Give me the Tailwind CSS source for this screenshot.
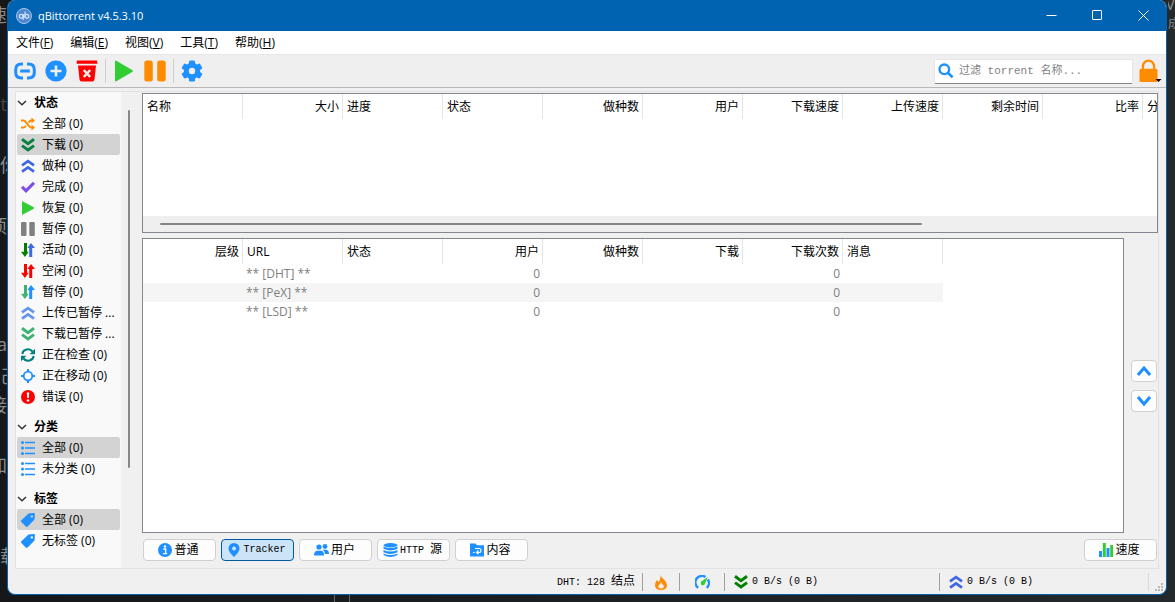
<!DOCTYPE html>
<html lang="zh-CN">
<head>
<meta charset="utf-8">
<title>qBittorrent v4.5.3.10</title>
<script src="https://cdn.jsdelivr.net/npm/@tailwindcss/browser@4"></script>
</head>
<body class="relative flex h-screen overflow-hidden bg-linear-to-r from-[#151719] to-[#24292b] pr-2 pb-[7px] pl-[7px] font-['Open_Sans','Noto_Sans_CJK_SC',sans-serif] text-[12px] leading-4 text-black">

<svg class="hidden" xmlns="http://www.w3.org/2000/svg">
  <symbol id="down2" viewBox="0 0 14 14"><path d="M1 1.300 7 5.600l6-4.300M1 7.600l6 4.300 6-4.300" fill="none" stroke="currentColor" stroke-width="3"/></symbol>
  <symbol id="up2" viewBox="0 0 14 14"><path d="M1 6.400 7 2.100l6 4.300M1 12.700l6-4.300 6 4.300" fill="none" stroke="currentColor" stroke-width="2.800"/></symbol>
  <symbol id="play" viewBox="0 0 14 14"><path d="M1 .8v12.400q0 .9.900.4l10.800-5.900q.9-.7 0-1.400L1.900.4Q1-.1 1 .8z" fill="currentColor"/></symbol>
  <symbol id="pause" viewBox="0 0 14 14"><rect x="0" y="0" width="5.500" height="14" rx="1.200" fill="currentColor"/><rect x="8.300" y="0" width="5.500" height="14" rx="1.200" fill="currentColor"/></symbol>
  <symbol id="arrD" viewBox="0 0 14 14"><path d="M3 0h3v8.700h1.700L3.900 13.900 0 8.700h3z" fill="currentColor"/></symbol>
  <symbol id="arrU" viewBox="0 0 14 14"><path d="M11.200 14H8.200V5H6.400L10 .1 14 5h-2.800z" fill="currentColor"/></symbol>
  <symbol id="list" viewBox="0 0 14 14"><g fill="currentColor"><circle cx="1.500" cy="1.500" r="1.500"/><circle cx="1.500" cy="7" r="1.500"/><circle cx="1.500" cy="12.500" r="1.500"/><path d="M4 .800h10v1.500H4zM4 6.200h10v1.600H4zM4 11.700h10v1.500H4z"/></g></symbol>
  <symbol id="tag" viewBox="0 0 14 14"><path fill-rule="evenodd" d="M7.500.6 12.600.1q1.500 0 1.300 1.400l-.4 5-6.800 6.900q-1 .8-1.900 0L.4 9.100q-.9-1 0-1.900zM10.800 2.200a1.200 1.200 0 1 0 .1 0z" fill="currentColor"/></symbol>
  <symbol id="chev" viewBox="0 0 10 6"><path d="M1 1l4 3.800L9 1" fill="none" stroke="#333" stroke-width="1.500"/></symbol>
</svg>

<div aria-hidden="true" class="absolute top-0 left-0 h-full w-[7px] overflow-hidden text-[18px] leading-5 text-[#8b8b8b]">
  <span class="absolute top-[5px] right-0">速</span>
  <span class="absolute top-[94px] right-0 text-[#444]">t</span>
  <span class="absolute top-[155px] left-0">你</span>
  <span class="absolute top-[216px] right-0">项</span>
  <span class="absolute top-[334px] right-0">a</span>
  <span class="absolute top-[366px] left-0">己</span>
  <span class="absolute top-[395px] right-0">接</span>
  <span class="absolute top-[455px] right-0">加</span>
  <span class="absolute top-[546px] left-0">载</span>
</div>
<div aria-hidden="true" class="absolute top-0 right-0 h-10 w-[7px] overflow-hidden text-[12px] text-[#8b8b8b]">
  <span class="absolute -top-1 right-0 text-[16px]">V</span>
  <span class="absolute top-4 left-0">成</span>
</div>
<div aria-hidden="true" class="absolute bottom-0 left-[334px] h-[7px] w-4 border-x border-[#666]"></div>

<main class="relative flex min-w-0 grow flex-col overflow-hidden rounded-lg border border-t-0 border-[#0063b1] bg-[#f0f0f0]">
  <header class="flex h-[31px] shrink-0 items-center bg-[#0063b1] pl-2 text-white">
    <svg class="size-4" viewBox="0 0 16 16"><circle cx="8" cy="8" r="7.500" fill="#4f86d0" stroke="#a9c8ee"/><g fill="none" stroke="#d4e6fb" stroke-width="1.200"><circle cx="5.200" cy="8.200" r="1.900"/><path d="M7.200 6v6M9 3.500v6.600"/><circle cx="10.900" cy="8.200" r="1.900"/></g></svg>
    <h1 class="ml-1.5 grow text-[11px]">qBittorrent v4.5.3.10</h1>
    <button aria-label="最小化" class="flex h-full w-[46px] items-center justify-center"><svg class="size-[11px]" viewBox="0 0 11 11"><path d="M.5 5.500h10" stroke="#fff"/></svg></button>
    <button aria-label="最大化" class="flex h-full w-[46px] items-center justify-center"><svg class="size-[11px]" viewBox="0 0 11 11"><rect x=".5" y=".5" width="9" height="9" rx=".5" fill="none" stroke="#fff"/></svg></button>
    <button aria-label="关闭" class="flex h-full w-[46px] items-center justify-center"><svg class="size-[11px]" viewBox="0 0 11 11"><path d="M.5.5l10 10M10.500.5l-10 10" stroke="#fff"/></svg></button>
  </header>

  <nav class="flex h-6 shrink-0 items-center gap-px border-b border-[#e8e8e8] bg-white">
    <button class="px-2">文件(<u>F</u>)</button>
    <button class="px-2">编辑(<u>E</u>)</button>
    <button class="px-2">视图(<u>V</u>)</button>
    <button class="px-2">工具(<u>T</u>)</button>
    <button class="px-2">帮助(<u>H</u>)</button>
  </nav>

  <div class="flex h-[33px] shrink-0 items-center border-b border-[#b8b8b8] bg-[#efefef] pl-px">
    <button aria-label="添加链接" class="flex w-[31px] justify-center text-[#1e90ff]"><svg class="size-[22px]" viewBox="0 0 22 22"><g fill="none" stroke="currentColor" stroke-width="3"><path d="M9 4H7.500Q1.700 4 1.700 9.500v3Q1.700 18 7.500 18H9M13 4h1.500q5.800 0 5.800 5.500v3q0 5.500-5.800 5.500H13"/><path d="M6.200 11h9.600"/></g></svg></button>
    <button aria-label="添加文件" class="flex w-[31px] justify-center"><svg class="size-[22px]" viewBox="0 0 22 22"><circle cx="11" cy="11" r="10.600" fill="#1e90ff"/><path d="M11 5.500v11M5.500 11h11" stroke="#efefef" stroke-width="2.600"/></svg></button>
    <button aria-label="删除" class="flex w-[31px] justify-center"><svg class="size-[22px]" viewBox="0 0 22 22"><path d="M1.500.6h19q.8 0 .8 1v2.200H.7V1.600q0-1 .8-1zM2 5.500h18l-1.500 14q-.3 2-2.200 2H5.700q-1.900 0-2.200-2z" fill="#f00"/><path d="m7.800 10 6.400 7M14.200 10l-6.400 7" stroke="#efefef" stroke-width="2.500"/></svg></button>
    <div class="flex h-6 w-1.5 justify-center"><div class="w-px bg-[#cfcfcf]"></div></div>
    <button aria-label="恢复" class="flex w-[31px] justify-center"><svg class="size-[22px]" viewBox="0 0 22 22"><path d="M2 1.500v19q0 1.400 1.300.7l16.200-9.500q1-.7 0-1.400L3.300.8Q2 .1 2 1.500z" fill="#32cd32"/></svg></button>
    <button aria-label="暂停" class="flex w-[31px] justify-center"><svg class="size-[22px]" viewBox="0 0 22 22" fill="#ff8c00"><rect x=".3" y=".5" width="8.500" height="21" rx="2.500"/><rect x="13.200" y=".5" width="8.500" height="21" rx="2.500"/></svg></button>
    <div class="flex h-6 w-1.5 justify-center"><div class="w-px bg-[#cfcfcf]"></div></div>
    <button aria-label="选项" class="flex w-[31px] justify-center"><svg class="size-[22px]" viewBox="0 0 22 22"><g fill="#1e90ff"><circle cx="11" cy="11" r="8.200"/><rect x="8" y=".5" width="6" height="21" rx="1.200"/><rect x="8" y=".5" width="6" height="21" rx="1.200" transform="rotate(60 11 11)"/><rect x="8" y=".5" width="6" height="21" rx="1.200" transform="rotate(120 11 11)"/></g><circle cx="11" cy="11" r="3.200" fill="#efefef"/></svg></button>
    <label class="ml-auto flex h-[25px] w-[199px] items-center rounded-xs border border-[#e5e5e5] border-b-[#868686] bg-white pl-[3px]">
      <svg class="size-4 shrink-0" viewBox="0 0 16 16" fill="none" stroke="#1e90ff"><circle cx="6.300" cy="6.300" r="4.800" stroke-width="2.300"/><path d="m9.800 9.800 4.800 4.500" stroke-width="2.600"/></svg>
      <input type="text" aria-label="过滤 torrent 名称" placeholder="过滤 torrent 名称..." class="ml-[5px] w-full min-w-0 bg-transparent font-['Liberation_Mono','Noto_Sans_CJK_SC',monospace] text-[11px] outline-none placeholder:text-[#7f7f7f]">
    </label>
    <button aria-label="锁定" class="mr-1 ml-1.5 flex"><svg class="h-6 w-[23px]" viewBox="0 0 23 24"><path d="M3.900 11V7.500a5.600 5.800 0 0 1 11.200 0V11" fill="none" stroke="#ff8c00" stroke-width="2.300"/><rect x=".5" y="9.800" width="18" height="13.200" rx="1.500" fill="#ff8c00"/><path d="M16.500 20h6l-3 3z" fill="#000"/></svg></button>
  </div>

  <div class="mx-[7px] mt-[3px] flex min-h-0 grow border border-[#e2e2e2]">
    <aside class="flex w-[105px] shrink-0 flex-col bg-[#f9f9f9] pt-px pr-px pl-px">
      <button class="flex h-5 items-center gap-[7px] text-left font-bold"><svg class="h-1.5 w-2.5"><use href="#chev"/></svg>状态</button>
      <button class="flex h-[21px] items-center gap-[7px] rounded-xs pl-1"><svg class="size-3.5 shrink-0" viewBox="0 0 14 14" fill="none" stroke="#ff8c00" stroke-width="2"><path d="M0 3.500h2.500q1 0 1.700.8l4.400 5.400q.7.800 1.700.8H12M0 10.500h2.500q1 0 1.700-.8l.7-.9M7.600 5.600l1-1.300q.7-.8 1.700-.8H12"/><path d="M10.500.5 14 3.500 10.500 6.500zM10.500 7.500 14 10.500 10.500 13.500z" fill="#ff8c00" stroke="none"/></svg>全部 (0)</button>
      <button class="flex h-[21px] items-center gap-[7px] rounded-xs bg-[#d3d3d3] pl-1"><svg class="size-3.5 shrink-0 text-[#0a8043]"><use href="#down2"/></svg>下载 (0)</button>
      <button class="flex h-[21px] items-center gap-[7px] rounded-xs pl-1"><svg class="size-3.5 shrink-0 text-[#4169e1]"><use href="#up2"/></svg>做种 (0)</button>
      <button class="flex h-[21px] items-center gap-[7px] rounded-xs pl-1"><svg class="size-3.5 shrink-0" viewBox="0 0 14 14"><path d="m1 6.800 4 4 8-8" fill="none" stroke="#7f4fe0" stroke-width="3.200"/></svg>完成 (0)</button>
      <button class="flex h-[21px] items-center gap-[7px] rounded-xs pl-1"><svg class="size-3.5 shrink-0 text-[#32cd32]"><use href="#play"/></svg>恢复 (0)</button>
      <button class="flex h-[21px] items-center gap-[7px] rounded-xs pl-1"><svg class="size-3.5 shrink-0 text-[#808080]"><use href="#pause"/></svg>暂停 (0)</button>
      <button class="flex h-[21px] items-center gap-[7px] rounded-xs pl-1"><svg class="size-3.5 shrink-0"><use href="#arrD" class="text-[#008000]"/><use href="#arrU" class="text-[#4169e1]"/></svg>活动 (0)</button>
      <button class="flex h-[21px] items-center gap-[7px] rounded-xs pl-1"><svg class="size-3.5 shrink-0 text-[#ff0000]"><use href="#arrD"/><use href="#arrU"/></svg>空闲 (0)</button>
      <button class="flex h-[21px] items-center gap-[7px] rounded-xs pl-1"><svg class="size-3.5 shrink-0"><use href="#arrD" class="text-[#3cb371]"/><use href="#arrU" class="text-[#1e90ff]"/></svg>暂停 (0)</button>
      <button class="flex h-[21px] items-center gap-[7px] rounded-xs pl-1 whitespace-nowrap"><svg class="size-3.5 shrink-0 text-[#6495ed]"><use href="#up2"/></svg>上传已暂停 ...</button>
      <button class="flex h-[21px] items-center gap-[7px] rounded-xs pl-1 whitespace-nowrap"><svg class="size-3.5 shrink-0 text-[#3cb371]"><use href="#down2"/></svg>下载已暂停 ...</button>
      <button class="flex h-[21px] items-center gap-[7px] rounded-xs pl-1"><svg class="size-3.5 shrink-0" viewBox="0 0 14 14" fill="none" stroke="#008080" stroke-width="2"><path d="M1.300 6a5.700 5.300 0 0 1 10.200-2.500M12.700 8A5.700 5.300 0 0 1 2.500 10.500"/><path d="M14 .8v5.400H8.600zM0 13.200V7.800h5.400z" fill="#008080" stroke="none"/></svg>正在检查 (0)</button>
      <button class="flex h-[21px] items-center gap-[7px] rounded-xs pl-1"><svg class="size-3.5 shrink-0" viewBox="0 0 14 14" fill="none" stroke="#1e90ff" stroke-width="1.800"><circle cx="7" cy="7" r="4.300"/><path d="M7 0v3M7 11v3M0 7h3M11 7h3" stroke-width="2"/></svg>正在移动 (0)</button>
      <button class="flex h-[21px] items-center gap-[7px] rounded-xs pl-1"><svg class="size-3.5 shrink-0" viewBox="0 0 14 14"><circle cx="7" cy="7" r="7" fill="#f00"/><path d="M5.800 2.500h2.400L7.800 8H6.200z" fill="#fff"/><circle cx="7" cy="10.500" r="1.300" fill="#fff"/></svg>错误 (0)</button>

      <button class="mt-2.5 flex h-5 items-center gap-[7px] text-left font-bold"><svg class="h-1.5 w-2.5"><use href="#chev"/></svg>分类</button>
      <button class="flex h-[21px] items-center gap-[7px] rounded-xs bg-[#d3d3d3] pl-1"><svg class="size-3.5 shrink-0 text-[#1e90ff]"><use href="#list"/></svg>全部 (0)</button>
      <button class="flex h-[21px] items-center gap-[7px] rounded-xs pl-1"><svg class="size-3.5 shrink-0 text-[#1e90ff]"><use href="#list"/></svg>未分类 (0)</button>

      <button class="mt-2.5 flex h-5 items-center gap-[7px] text-left font-bold"><svg class="h-1.5 w-2.5"><use href="#chev"/></svg>标签</button>
      <button class="flex h-[21px] items-center gap-[7px] rounded-xs bg-[#d3d3d3] pl-1"><svg class="size-3.5 shrink-0 text-[#1e90ff]"><use href="#tag"/></svg>全部 (0)</button>
      <button class="flex h-[21px] items-center gap-[7px] rounded-xs pl-1"><svg class="size-3.5 shrink-0 text-[#1e90ff]"><use href="#tag"/></svg>无标签 (0)</button>
    </aside>
    <div class="flex w-[21px] shrink-0 justify-start pt-[18px] pl-[7px]"><div class="h-[358px] w-0.5 rounded-full bg-[#868686]"></div></div>

    <div class="flex min-w-0 grow flex-col pt-px">
      <section class="flex h-[140px] shrink-0 flex-col overflow-hidden border border-[#828790] bg-white">
        <div class="grow overflow-hidden">
          <table class="w-[1100px] table-fixed border-separate border-spacing-0">
            <thead><tr class="h-[25px] text-right *:border-r *:border-[#e5e5e5] *:px-1 *:pr-[3px] *:font-normal">
              <th class="text-left">名称</th><th>大小</th><th class="text-left">进度</th><th class="text-left">状态</th><th>做种数</th><th>用户</th><th>下载速度</th><th>上传速度</th><th>剩余时间</th><th>比率</th><th class="text-left">分享率</th>
            </tr></thead>
          </table>
        </div>
        <div class="flex h-4 items-center bg-[#efefef] px-[17px]"><div class="h-0.5 w-7/9 rounded-full bg-[#868686]"></div></div>
      </section>

      <div class="mt-[5px] flex min-h-0 grow">
        <section class="min-w-0 grow overflow-hidden border border-[#828790] bg-white">
          <table class="w-[800px] table-fixed border-separate border-spacing-0">
            <thead><tr class="h-[25px] text-right *:border-r *:border-[#e5e5e5] *:px-1 *:pr-[3px] *:font-normal">
              <th>层级</th><th class="text-left">URL</th><th class="text-left">状态</th><th>用户</th><th>做种数</th><th>下载</th><th>下载次数</th><th class="text-left">消息</th>
            </tr></thead>
            <tbody class="text-right text-[#808080]">
              <tr class="h-[19px] *:px-[3px]"><td></td><td class="text-left">** [DHT] **</td><td></td><td>0</td><td></td><td></td><td>0</td><td></td></tr>
              <tr class="h-[19px] bg-[#f5f5f5] *:px-[3px]"><td></td><td class="text-left">** [PeX] **</td><td></td><td>0</td><td></td><td></td><td>0</td><td></td></tr>
              <tr class="h-[19px] *:px-[3px]"><td></td><td class="text-left">** [LSD] **</td><td></td><td>0</td><td></td><td></td><td>0</td><td></td></tr>
            </tbody>
          </table>
        </section>
        <div class="flex w-[34px] shrink-0 flex-col items-center justify-center gap-2 pl-1.5">
          <button aria-label="上移" class="flex h-[22px] w-[26px] items-center justify-center rounded-sm border border-[#d0d0d0] bg-[#fdfdfd]"><svg class="h-2.5 w-3.5" viewBox="0 0 14 10"><path d="m1 9 6-7 6 7" fill="none" stroke="#1e90ff" stroke-width="3"/></svg></button>
          <button aria-label="下移" class="flex h-[22px] w-[26px] items-center justify-center rounded-sm border border-[#d0d0d0] bg-[#fdfdfd]"><svg class="h-2.5 w-3.5" viewBox="0 0 14 10"><path d="m1 1 6 7 6-7" fill="none" stroke="#1e90ff" stroke-width="3"/></svg></button>
        </div>
      </div>

      <div class="mt-1.5 mb-[7px] flex shrink-0 gap-[5px] pr-px pl-px *:flex *:h-[22px] *:w-[73px] *:items-center *:justify-center *:rounded-sm *:border *:border-[#d0d0d0] *:bg-[#fdfdfd]">
        <button class="gap-0.5 pr-0.5"><svg class="size-3.5" viewBox="0 0 14 14"><circle cx="7" cy="7" r="7" fill="#1e90ff"/><path d="M5.300 6h2.400v4.500M5 10.700h4.200" fill="none" stroke="#fff" stroke-width="1.300"/><circle cx="7" cy="3.500" r="1.200" fill="#fff"/></svg>普通</button>
        <button class="gap-0.5 border-[#005a9e]! bg-[#cce4f7]! pr-0.5"><svg class="size-3.5" viewBox="0 0 14 14"><path fill-rule="evenodd" d="M7 0a5.500 5.500 0 0 1 5.500 5.500C12.500 8.500 9 12 7 14 5 12 1.500 8.500 1.500 5.500A5.500 5.500 0 0 1 7 0zm0 3.600a2 2 0 1 0 .1 0z" fill="#1e90ff"/></svg><span class="font-['Liberation_Mono',monospace] text-[10px]">Tracker</span></button>
        <button class="gap-0.5 pr-0.5"><svg class="h-3.5 w-[15px]" viewBox="0 0 15 14" fill="#1e90ff"><circle cx="5" cy="4" r="2.600"/><circle cx="11" cy="3.500" r="2.400"/><path d="M0 12.500q0-4.800 3.500-4.800H7q3 0 3 4.800zM8.500 6.700h3q3.500 0 3.500 4.300h-4q-.4-3.300-2.500-4.300z"/></svg>用户</button>
        <button class="gap-0.5 pr-0.5"><svg class="h-3.5 w-[15px]" viewBox="0 0 15 14" fill="#1e90ff"><ellipse cx="7.500" cy="2.200" rx="7" ry="2.200"/><path d="M.5 3.500q7 3.200 14 0v2.300q-7 3.400-14 0zM.5 7q7 3.200 14 0v2.300q-7 3.400-14 0zM.5 10.500q7 3.200 14 0v1.500q-7 3.800-14 0z"/></svg><span><span class="font-['Liberation_Mono',monospace] text-[10px]">HTTP </span>源</span></button>
        <button class="gap-0.5 pr-0.5"><svg class="size-3.5" viewBox="0 0 14 14"><path d="M0 .5h5.500L7 2.300h7V13.500H0z" fill="#1e90ff"/><path d="M5 5.500h4.500q1.500 0 1.500 2t-1.500 2H7M8.500 7.500 6.500 9.500l2 1.800M3 9.500h1.500" fill="none" stroke="#fff" stroke-width="1.200"/></svg>内容</button>
        <button class="ml-auto gap-0.5 pr-0.5"><svg class="size-3.5" viewBox="0 0 14 14"><path d="M0 8h3v6H0zM7.500 5h3v9h-3z" fill="#1e90ff"/><path d="M3.800 0h3v14h-3zM11.200 2H14v12h-2.800z" fill="#32cd32"/></svg>速度</button>
      </div>
    </div>
  </div>

  <footer class="flex h-[25px] shrink-0 items-center justify-end">
    <span class="mr-[7px]"><span class="font-['Liberation_Mono',monospace] text-[10px]">DHT: 128 </span>结点</span>
    <div class="h-[18px] w-px bg-[#a0a0a0]"></div>
    <button aria-label="连接状态" class="flex w-9 justify-center"><svg class="h-4 w-3" viewBox="0 0 12 16"><path d="M5.500 0q0 2.500 3.500 5.500 3 2.800 3 5.500 0 5-6 5t-6-5q0-3 2.200-5.200Q2.500 7.500 3.500 8 6 5 5.500 0z" fill="#ff8c00"/><path d="M6 8q.5 1.500 2 2.800t.5 2.700Q7.800 14.500 6 14.500T3.300 13q0-1.400 1.200-2.500T6 8z" fill="#efefef"/></svg></button>
    <div class="h-[18px] w-px bg-[#a0a0a0]"></div>
    <button aria-label="备用速度限制" class="flex w-11 justify-center"><svg class="h-3.5 w-[15px]" viewBox="0 0 15 14"><path d="M3.200 12.800A6.200 6.200 0 0 1 10.500 2M12.800 4.500a6.200 6.200 0 0 1-1 8.300" fill="none" stroke="#1e90ff" stroke-width="2.400"/><path d="M12.800 2 9.500 9.500q-1.700 1.700-3.400 0-1-1.700.3-2.900z" fill="#32cd32"/></svg></button>
    <div class="h-[18px] w-px bg-[#a0a0a0]"></div>
    <button class="flex w-[214px] items-center gap-1 pl-[9px]"><svg class="size-3.5 text-[#008000]"><use href="#down2"/></svg><span class="font-['Liberation_Mono',monospace] text-[10px]">0 B/s (0 B)</span></button>
    <div class="h-[18px] w-px bg-[#a0a0a0]"></div>
    <button class="flex w-[208px] items-center gap-1 pl-[9px]"><svg class="size-3.5 text-[#4169e1]"><use href="#up2"/></svg><span class="font-['Liberation_Mono',monospace] text-[10px]">0 B/s (0 B)</span></button>
    <div class="h-[18px] w-px bg-[#d8d8d8]"></div>
    <svg class="mr-0.5 mb-0.5 ml-1.5 size-[9px] self-end" viewBox="0 0 9 9" fill="#b8b8b8"><path d="M6 0h2v2H6zM3 3h2v2H3zM6 3h2v2H6zM0 6h2v2H0zM3 6h2v2H3zM6 6h2v2H6z"/></svg>
  </footer>
</main>
</body>
</html>
